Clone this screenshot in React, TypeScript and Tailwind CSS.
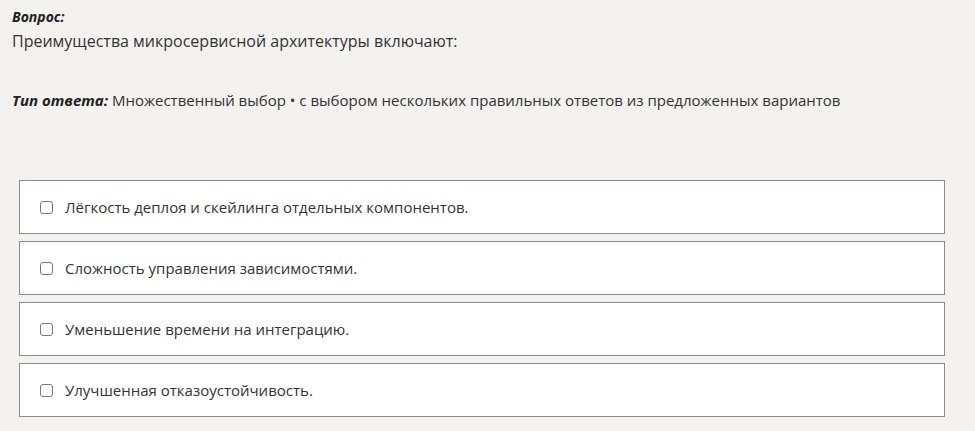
const options = [
  'Лёгкость деплоя и скейлинга отдельных компонентов.',
  'Сложность управления зависимостями.',
  'Уменьшение времени на интеграцию.',
  'Улучшенная отказоустойчивость.',
];

export default function App() {
  return (
    <div className="min-h-[431px] w-full bg-[#f3f2ef] text-[#333] font-['Open_Sans',sans-serif]">
      <div className="px-3 pt-[7px]">
        <div className="text-[14px] font-bold italic leading-[20px] text-[#222]">Вопрос:</div>
        <div className="mt-[2px] text-[16px] leading-[24px]">Преимущества микросервисной архитектуры включают:</div>
        <div className="mt-[36px] text-[15px] leading-[22px]">
          <span className="font-bold italic text-[#222]">Тип ответа:</span> Множественный выбор • с выбором нескольких правильных ответов из предложенных вариантов
        </div>
      </div>
      <div className="ml-[19px] mr-[30px] mt-[69px] flex flex-col gap-[7px]">
        {options.map((o) => (
          <label key={o} className="flex h-[54px] items-center border border-[#8a8a8a] bg-white pl-[20px]">
            <span className="mr-[12px] h-[13px] w-[13px] rounded-[3px] border border-[#767676] bg-white" />
            <span className="text-[15px] text-[#333]">{o}</span>
          </label>
        ))}
      </div>
    </div>
  );
}
